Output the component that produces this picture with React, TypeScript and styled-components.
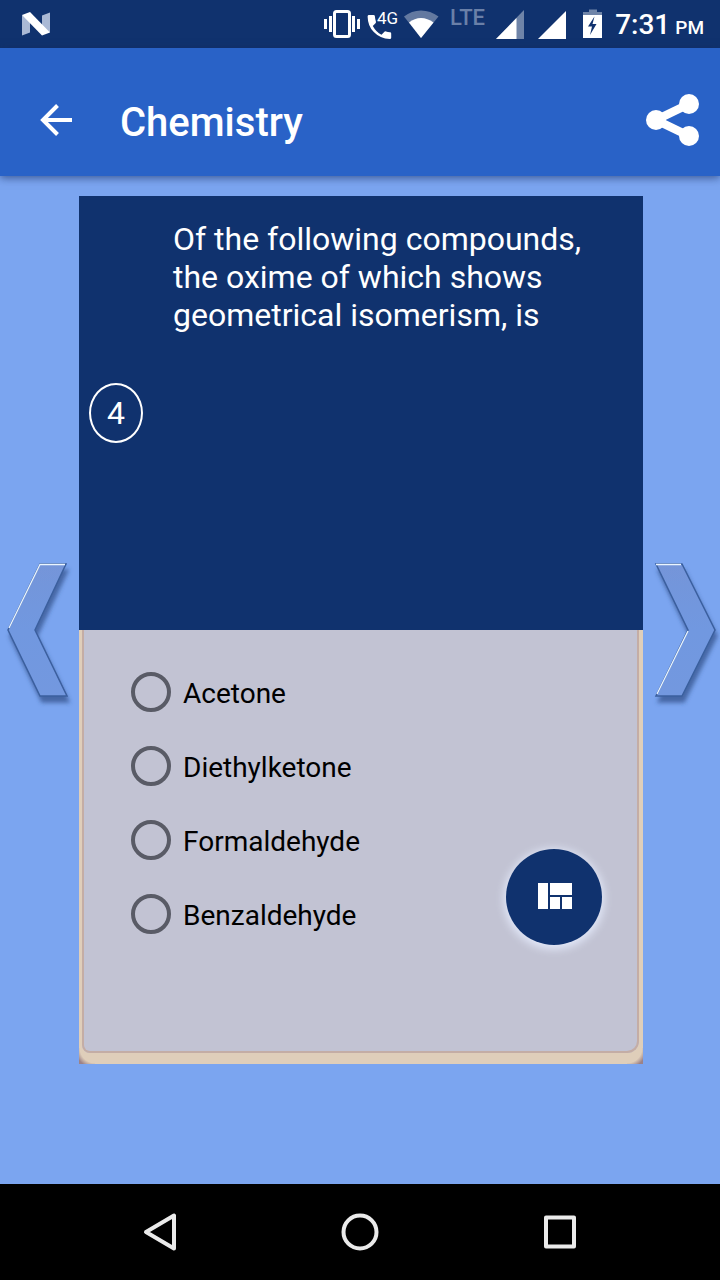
import React, { useState } from 'react';
import styled, { createGlobalStyle } from 'styled-components';

const GlobalStyle = createGlobalStyle`
  * { box-sizing: border-box; }
  body { margin: 0; background: #7ba5f0; font-family: Roboto, "Liberation Sans", sans-serif; }
  button { border: 0; padding: 0; background: none; color: inherit; font: inherit; cursor: pointer; }
  svg { display: block; }
`;

const Screen = styled.div`
  display: flex;
  flex-direction: column;
  min-height: 100vh;
  background: #7ba5f0;
`;

const StatusBar = styled.div`
  display: flex;
  align-items: center;
  height: 48px;
  padding: 0 16px 0 18px;
  background: #10326e;
  color: #fff;
`;

const StatusIcons = styled.div`
  display: flex;
  margin-left: auto;
`;

const Clock = styled.div`
  display: flex;
  align-items: baseline;
  gap: 5px;
  padding: 4px 0 0 4px;
  font-size: 28px;
  font-weight: 500;
  line-height: 32px;
  white-space: nowrap;
`;

const Meridiem = styled.span`
  font-size: 19px;
`;

const AppBar = styled.header`
  position: relative;
  display: flex;
  align-items: center;
  height: 128px;
  padding: 16px 20px 0 40px;
  background: #2962c7;
  color: #fff;
  box-shadow: 0 2px 8px rgba(20, 40, 90, 0.6);
`;

const Title = styled.h1`
  flex: 1;
  margin: 0;
  padding: 6px 0 0 48px;
  font-size: 40px;
  font-weight: 500;
  line-height: 48px;
`;

const Main = styled.main`
  flex: 1;
  display: grid;
  grid-template-columns: 79px minmax(0, 1fr) 77px;
  align-items: center;
  align-content: start;
  padding: 20px 0 24px;
`;

const Card = styled.section`
  position: relative;
  display: grid;
  grid-auto-rows: minmax(434px, auto);
`;

const Question = styled.div`
  display: flex;
  align-items: flex-start;
  padding: 24px 40px 24px 10px;
  background: #10326e;
  color: #fff;
`;

const QuestionNumber = styled.div`
  display: flex;
  align-items: center;
  justify-content: center;
  align-self: center;
  width: 54px;
  height: 60px;
  margin-right: 30px;
  border: 2px solid #fff;
  border-radius: 50%;
  font-size: 32px;
`;

const QuestionText = styled.h2`
  flex: 1;
  margin: 0;
  font-size: 32px;
  font-weight: 400;
  line-height: 38px;
`;

const AnswerFrame = styled.div`
  display: flex;
  padding: 0 4px 11px 3px;
  background:
    radial-gradient(circle at 100% 0, transparent 15px, #9c8287 20px) left bottom / 16px 16px no-repeat,
    radial-gradient(circle at 0 0, transparent 15px, #9c8287 20px) right bottom / 16px 16px no-repeat,
    #dfceba;
`;

const Options = styled.fieldset`
  flex: 1;
  display: flex;
  flex-direction: column;
  gap: 34px;
  margin: 0;
  padding: 42px 47px;
  border: 0 solid #c4ada5;
  border-width: 0 2px 2px 2px;
  border-radius: 0 0 12px 8px;
  background: #c2c3d3;
`;

const Option = styled.label`
  display: flex;
  align-items: center;
  gap: 12px;
  height: 40px;
  color: #000;
  font-size: 28px;
  line-height: 32px;
  cursor: pointer;
`;

const Radio = styled.input`
  appearance: none;
  flex: none;
  width: 40px;
  height: 40px;
  margin: 0;
  border: 4px solid #595b66;
  border-radius: 50%;

  &:checked {
    border-color: #10326e;
    background: radial-gradient(circle, #10326e 0 10px, transparent 11px);
  }
`;

const OptionText = styled.span`
  padding-top: 4px;
`;

const Fab = styled.button`
  position: absolute;
  right: 41px;
  bottom: 119px;
  display: flex;
  align-items: center;
  justify-content: center;
  width: 96px;
  height: 96px;
  border-radius: 50%;
  background: #10326e;
  box-shadow: 0 2px 10px 2px rgba(232, 238, 255, 0.9);
`;

const NavBar = styled.nav`
  display: flex;
  align-items: center;
  justify-content: center;
  gap: 136px;
  height: 96px;
  background: #000;
`;

const NavButton = styled.button`
  width: 64px;
  height: 64px;
`;

function StatusSymbols() {
  return (
    <StatusIcons>
      <svg width="42" height="48" viewBox="320 0 42 48" fill="#fff">
        <rect x="333.500" y="11.500" width="15" height="25" rx="2" fill="none" stroke="#fff" strokeWidth="3" />
        <path d="M323 19h3v10h-3zM328 16h3v16h-3zM351 16h3v16h-3zM356 19h3v10h-3z" />
      </svg>
      <svg width="38" height="48" viewBox="362 0 38 48" fill="#fff">
        <path d="M368 15h4.500q1.300 0 1.400 1.300.2 2.900 1 5.200.3 1-.4 1.700l-2.700 2.800q3.200 6 8.700 8.700l2.700-2.800q.8-.8 1.800-.4 1.800.7 4 .7 1.200.1 1.200 1.300v4.300q0 1.300-1.400 1.300-9.700-.4-16-7-6-6.200-6.200-15.700.1-1.400 1.400-1.400z" />
        <text x="376" y="24" fontSize="17">4G</text>
      </svg>
      <svg width="42" height="48" viewBox="400 0 42 48" fill="#fff">
        <path d="M403 16.500q7.500-6 17-6t17.500 6L420 38z" opacity=".35" />
        <path d="M408 22.500q5.500-4.500 12-4.500t12.500 4.500L420 38z" />
      </svg>
      <svg width="48" height="48" viewBox="442 0 48 48" fill="#6a80a8">
        <text x="449" y="25" fontSize="22" fontWeight="500">LTE</text>
      </svg>
      <svg width="38" height="48" viewBox="490 0 38 48" fill="#fff">
        <path d="M523 10v29h-28z" opacity=".4" />
        <path d="M515.500 18v21H495z" />
      </svg>
      <svg width="44" height="48" viewBox="528 0 44 48" fill="#fff">
        <path d="M565 11v28h-28z" />
      </svg>
      <svg width="38" height="48" viewBox="572 0 38 48" fill="#fff">
        <path d="M588 9.500h8V12h5v3h-19v-3h6z" opacity=".4" />
        <path d="M582 15h19v23h-19z" />
        <path d="M593.500 16.500l-6.500 10h4l-2 8.500 6.500-11h-4z" fill="#10326e" />
      </svg>
    </StatusIcons>
  );
}

function Chevron({ direction }: { direction: 'left' | 'right' }) {
  const left = direction === 'left';
  const shape = left ? 'M40 14H66L35 80L67 146H40L8 80Z' : 'M13 14H39L72 80L39 146H13L45 80Z';
  const fillId = `chevron-fill-${direction}`;
  const shadowId = `chevron-shadow-${direction}`;
  return (
    <svg width="77" height="160" viewBox="0 0 77 160">
      <defs>
        <linearGradient id={fillId} x1="0" y1="0" x2="0" y2="1">
          <stop offset="0" stopColor="#7495d9" />
          <stop offset=".5" stopColor="#7198e0" />
          <stop offset="1" stopColor="#7398df" />
        </linearGradient>
        <filter id={shadowId} x="-20%" y="-20%" width="140%" height="140%">
          <feDropShadow dx="2" dy="6" stdDeviation="2" floodColor="#2d4c85" floodOpacity=".7" />
        </filter>
      </defs>
      <path d={shape} fill={`url(#${fillId})`} stroke="#3b5f9e" strokeWidth="1.500" filter={`url(#${shadowId})`} />
      <path
        d={left ? 'M9 78L40 14.500H65' : 'M13 14.500H38M45 81L14 144'}
        fill="none"
        stroke="#eaf5ff"
        strokeWidth="1.300"
      />
    </svg>
  );
}

const options = ['Acetone', 'Diethylketone', 'Formaldehyde', 'Benzaldehyde'];

export default function App() {
  const [answer, setAnswer] = useState<string | null>(null);

  return (
    <Screen>
      <GlobalStyle />
      <StatusBar>
        <svg width="36" height="48" viewBox="18 0 36 48">
          <path d="M22 15v20.500l8-3V20zM50 12.500v20L42 28V15.500z" fill="#aab9d5" />
          <path d="M22 15l8-3 20 20.500-8 3z" fill="#fff" />
        </svg>
        <StatusSymbols />
        <Clock>
          7:31<Meridiem>PM</Meridiem>
        </Clock>
      </StatusBar>
      <AppBar>
        <button type="button" aria-label="Back">
          <svg width="32" height="32" viewBox="0 0 32 32" fill="none" stroke="#fff" strokeWidth="4">
            <path d="M32 16H3M17.500 1.500L3 16l14.500 14.500" />
          </svg>
        </button>
        <Title>Chemistry</Title>
        <button type="button" aria-label="Share">
          <svg width="54" height="54" viewBox="0 0 54 54" fill="#fff">
            <path d="M43 11L10 27l33 16" fill="none" stroke="#fff" strokeWidth="8.500" />
            <circle cx="10" cy="27" r="10" />
            <circle cx="43" cy="11" r="10" />
            <circle cx="43" cy="43" r="10" />
          </svg>
        </button>
      </AppBar>
      <Main>
        <button type="button" aria-label="Previous question">
          <Chevron direction="left" />
        </button>
        <Card>
          <Question>
            <QuestionNumber>4</QuestionNumber>
            <QuestionText id="question">Of the following compounds, the oxime of which shows geometrical isomerism, is</QuestionText>
          </Question>
          <AnswerFrame>
            <Options aria-labelledby="question">
              {options.map((option) => (
                <Option key={option}>
                  <Radio
                    type="radio"
                    name="answer"
                    value={option}
                    checked={answer === option}
                    onChange={() => setAnswer(option)}
                  />
                  <OptionText>{option}</OptionText>
                </Option>
              ))}
            </Options>
          </AnswerFrame>
          <Fab type="button" aria-label="All questions">
            <svg width="36" height="28" viewBox="0 0 36 28" fill="#fff">
              <path d="M2 0h10v26H2zM14 0h22v12H14zM14 14h10v12H14zM26 14h10v12H26z" />
            </svg>
          </Fab>
        </Card>
        <button type="button" aria-label="Next question">
          <Chevron direction="right" />
        </button>
      </Main>
      <NavBar>
        <NavButton type="button" aria-label="System back">
          <svg width="64" height="64" viewBox="0 0 64 64" fill="none" stroke="#ebebeb" strokeWidth="4" strokeLinejoin="round">
            <path d="M46 15.500v33L18 32z" />
          </svg>
        </NavButton>
        <NavButton type="button" aria-label="Home">
          <svg width="64" height="64" viewBox="0 0 64 64" fill="none" stroke="#ebebeb" strokeWidth="4">
            <circle cx="32" cy="32" r="16.500" />
          </svg>
        </NavButton>
        <NavButton type="button" aria-label="Recent apps">
          <svg width="64" height="64" viewBox="0 0 64 64" fill="none" stroke="#ebebeb" strokeWidth="4" strokeLinejoin="round">
            <rect x="18" y="17.500" width="28" height="29" />
          </svg>
        </NavButton>
      </NavBar>
    </Screen>
  );
}
